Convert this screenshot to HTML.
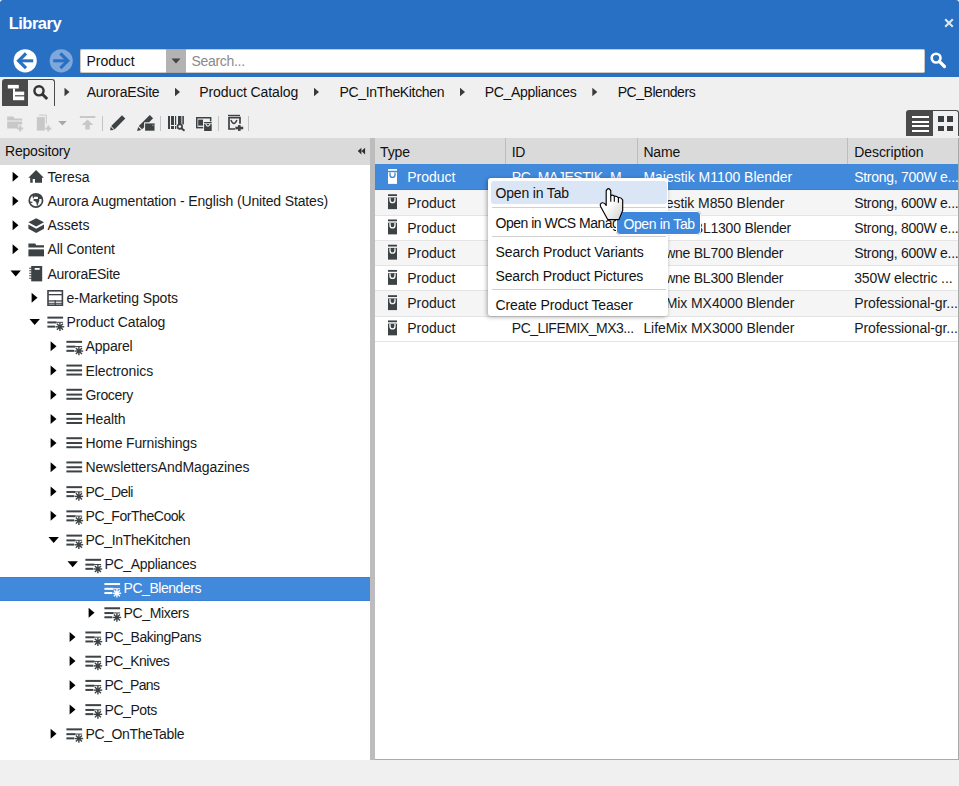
<!DOCTYPE html>
<html><head><meta charset="utf-8"><style>
html,body{margin:0;padding:0;width:959px;height:786px;overflow:hidden;background:#ffffff;}
body{position:relative;font-family:"Liberation Sans",sans-serif;}
.b{position:absolute;display:block;}
.t{position:absolute;white-space:nowrap;}
.t,.b{}
</style></head><body>
<div class="b" style="left:0px;top:0px;width:959px;height:77px;background:#2770c4;border-radius:3px 3px 0 0;"></div>
<div class="t" style="left:8.7px;top:14.38px;font-size:16.5px;line-height:19.8px;color:#ffffff;font-weight:bold;letter-spacing:-0.5px;">Library</div>
<svg class="b" style="left:944px;top:18px;overflow:visible" width="11" height="11"><g transform="translate(0.000 0.000)"><path d="M1.2 1.2 L8.8 8.8 M8.8 1.2 L1.2 8.8" stroke="#dfe7f2" stroke-width="2.1" stroke-linecap="butt"/></g></svg>
<svg class="b" style="left:13px;top:48px;overflow:visible" width="25" height="25"><g transform="translate(0.200 0.800)"><circle cx="12" cy="12" r="11.6" fill="#ffffff"/><path d="M12.8 4.6 L5.4 12 L12.8 19.4" fill="none" stroke="#2770c4" stroke-width="3.2"/><path d="M6.5 12 H20" stroke="#2770c4" stroke-width="3"/></g></svg>
<svg class="b" style="left:49px;top:48px;overflow:visible" width="25" height="25"><g transform="translate(0.200 0.800)"><circle cx="12" cy="12" r="11.6" fill="#7ea8dc"/><path d="M11.2 4.6 L18.6 12 L11.2 19.4" fill="none" stroke="#2770c4" stroke-width="3.2"/><path d="M4 12 H17.5" stroke="#2770c4" stroke-width="3"/></g></svg>
<div class="b" style="left:80px;top:49px;width:86px;height:24px;background:#ffffff;border-radius:2px 0 0 2px;border:1px solid #cfc9c3;border-right:0;box-sizing:border-box;"></div>
<div class="t" style="left:86.5px;top:53.25px;font-size:14px;line-height:16.8px;color:#111;font-weight:normal;letter-spacing:-0.021px;">Product</div>
<div class="b" style="left:166px;top:49px;width:20px;height:24px;background:#b3b3b3;border-top:1px solid #a9a6a3;border-bottom:1px solid #a9a6a3;box-sizing:border-box;"></div>
<svg class="b" style="left:171px;top:58px;overflow:visible" width="11" height="7"><g transform="translate(0.000 0.000)"><path d="M0.5 0.5 H9.5 L5 5.5 Z" fill="#444"/></g></svg>
<div class="b" style="left:186px;top:49px;width:739px;height:24px;background:#ffffff;border-radius:0 2px 2px 0;border:1px solid #cfc9c3;border-left:0;box-sizing:border-box;"></div>
<div class="t" style="left:191.5px;top:53.25px;font-size:14px;line-height:16.8px;color:#8a8a8a;font-weight:normal;letter-spacing:-0.313px;">Search...</div>
<svg class="b" style="left:929px;top:51px;overflow:visible" width="19" height="19"><g transform="translate(0.500 0.500)"><circle cx="6.6" cy="6.6" r="4.4" fill="none" stroke="#ffffff" stroke-width="2.6"/><path d="M9.8 9.8 L15 15" stroke="#ffffff" stroke-width="3.2" stroke-linecap="round"/></g></svg>
<div class="b" style="left:0px;top:77px;width:959px;height:709px;background:#f0f0f0;"></div>
<div class="b" style="left:2px;top:79px;width:26px;height:27px;background:#4a4a4a;border-radius:3px 0 0 0;"></div>
<div class="b" style="left:28px;top:79px;width:27px;height:27px;background:#f0f0f0;border-top:1px solid #4a4a4a;border-right:1px solid #4a4a4a;border-radius:0 3px 0 0;box-sizing:border-box;"></div>
<svg class="b" style="left:7px;top:84px;overflow:visible" width="19" height="18"><g transform="translate(0.000 0.000)"><rect x="0.8" y="0.9" width="11" height="3.6" fill="#fff"/><rect x="6" y="4.5" width="2" height="11.7" fill="#fff"/><rect x="8" y="7.6" width="9.2" height="3.6" fill="#fff"/><rect x="8" y="12.4" width="9.2" height="3.8" fill="#fff"/></g></svg>
<svg class="b" style="left:32px;top:84px;overflow:visible" width="19" height="19"><g transform="translate(0.000 0.000)"><circle cx="7" cy="6.8" r="4.6" fill="none" stroke="#333" stroke-width="2.4"/><path d="M10.2 10 L15.2 15" stroke="#333" stroke-width="3"/></g></svg>
<svg class="b" style="left:64px;top:87px;overflow:visible" width="7" height="10"><g transform="translate(0.500 0.800)"><path d="M0 0 L5 4.2 L0 8.4 Z" fill="#3a3a3a"/></g></svg>
<div class="t" style="left:86.75px;top:83.85px;font-size:14px;line-height:16.8px;color:#111;font-weight:normal;letter-spacing:-0.264px;">AuroraESite</div>
<svg class="b" style="left:175px;top:87px;overflow:visible" width="7" height="10"><g transform="translate(0.000 0.800)"><path d="M0 0 L5 4.2 L0 8.4 Z" fill="#3a3a3a"/></g></svg>
<div class="t" style="left:199.3px;top:83.85px;font-size:14px;line-height:16.8px;color:#111;font-weight:normal;letter-spacing:-0.106px;">Product Catalog</div>
<svg class="b" style="left:314px;top:87px;overflow:visible" width="7" height="10"><g transform="translate(0.000 0.800)"><path d="M0 0 L5 4.2 L0 8.4 Z" fill="#3a3a3a"/></g></svg>
<div class="t" style="left:339.5px;top:83.85px;font-size:14px;line-height:16.8px;color:#111;font-weight:normal;letter-spacing:-0.338px;">PC_InTheKitchen</div>
<svg class="b" style="left:460px;top:87px;overflow:visible" width="7" height="10"><g transform="translate(0.000 0.800)"><path d="M0 0 L5 4.2 L0 8.4 Z" fill="#3a3a3a"/></g></svg>
<div class="t" style="left:484.8px;top:83.85px;font-size:14px;line-height:16.8px;color:#111;font-weight:normal;letter-spacing:-0.317px;">PC_Appliances</div>
<svg class="b" style="left:592px;top:87px;overflow:visible" width="7" height="10"><g transform="translate(0.300 0.800)"><path d="M0 0 L5 4.2 L0 8.4 Z" fill="#3a3a3a"/></g></svg>
<div class="t" style="left:617.7px;top:83.85px;font-size:14px;line-height:16.8px;color:#111;font-weight:normal;letter-spacing:-0.452px;">PC_Blenders</div>
<svg class="b" style="left:7px;top:115px;overflow:visible" width="19" height="18"><g transform="translate(0.200 0.500)"><path d="M0 1 H6 L7.5 3 H15 V5 H0 Z" fill="#c8c8c8"/><path d="M0 6 H15 V9 H11 V13 H0 Z" fill="#c8c8c8"/><path d="M12 10 H14 V12 H16 V14 H14 V16 H12 V14 H10 V12 H12 Z" fill="#c8c8c8"/></g></svg>
<svg class="b" style="left:36px;top:114px;overflow:visible" width="18" height="19"><g transform="translate(0.300 0.600)"><path d="M0.5 2.5 H8.5 V16 H0.5 Z" fill="#c8c8c8"/><path d="M2.5 0.5 H10 V9" fill="none" stroke="#c8c8c8" stroke-width="1"/><path d="M11 11 H13 V13 H15 V15 H13 V17 H11 V15 H9 V13 H11 Z" fill="#c8c8c8"/></g></svg>
<svg class="b" style="left:58px;top:121px;overflow:visible" width="10" height="6"><g transform="translate(0.200 0.000)"><path d="M0 0 H8.5 L4.25 4.5 Z" fill="#a8a8a8"/></g></svg>
<svg class="b" style="left:79px;top:116px;overflow:visible" width="17" height="15"><g transform="translate(0.800 0.000)"><rect x="0" y="0" width="15.5" height="2" fill="#c8c8c8"/><path d="M7.75 3.5 L13.5 9 H10 V13.5 H5.5 V9 H2 Z" fill="#c8c8c8"/></g></svg>
<div class="b" style="left:102px;top:116px;width:1px;height:14.5px;background:#c4c4c4;"></div>
<div class="b" style="left:160px;top:116px;width:1px;height:14.5px;background:#c4c4c4;"></div>
<div class="b" style="left:218px;top:116px;width:1px;height:14.5px;background:#c4c4c4;"></div>
<div class="b" style="left:248px;top:116px;width:1px;height:14.5px;background:#c4c4c4;"></div>
<svg class="b" style="left:109px;top:114px;overflow:visible" width="18" height="17"><g transform="translate(0.500 0.500)"><path d="M12.5 0.8 L15.8 4.1 L5 14.9 L1.7 11.6 Z" fill="#3d4245"/><path d="M1.2 12.2 L4.4 15.4 L0.6 15.8 Z" fill="#3d4245"/></g></svg>
<svg class="b" style="left:136px;top:114px;overflow:visible" width="20" height="18"><g transform="translate(0.500 0.500)"><path d="M13.3 0.5 L16.6 3.8 L5.6 14.8 L2.3 11.5 Z" fill="#3d4245"/><path d="M1.6 12.4 L4.8 15.6 L0.6 16.6 Z" fill="#3d4245"/><rect x="7.6" y="7.8" width="11.4" height="9.2" fill="#f0f0f0"/><rect x="8.6" y="8.7" width="9.4" height="7.5" fill="#3d4245"/><rect x="8.6" y="8.7" width="9.4" height="0.8" fill="#9a9a9a"/><circle cx="16.4" cy="10.8" r="0.6" fill="#b9c9b9"/></g></svg>
<svg class="b" style="left:168px;top:116px;overflow:visible" width="19" height="17"><g transform="translate(0.000 0.000)"><rect x="0" y="0" width="2" height="13" fill="#3d4245"/><rect x="3" y="0" width="3" height="13" fill="#3d4245"/><rect x="7" y="0" width="1.2" height="13" fill="#3d4245"/><rect x="10" y="0" width="3.4" height="8.4" fill="#3d4245"/><rect x="14.3" y="0" width="1.6" height="8.4" fill="#3d4245"/><rect x="2" y="9" width="7.5" height="1" fill="#f0f0f0"/><circle cx="11.8" cy="10.6" r="2.3" fill="none" stroke="#3d4245" stroke-width="1.7"/><path d="M13.4 12.3 L16.5 14.8" stroke="#3d4245" stroke-width="2"/></g></svg>
<svg class="b" style="left:196px;top:117px;overflow:visible" width="19" height="16"><g transform="translate(0.000 0.000)"><rect x="0.75" y="0.75" width="13.9" height="9.9" fill="none" stroke="#3d4245" stroke-width="1.5"/><rect x="2.2" y="2.6" width="4.8" height="6" fill="#3d4245"/><rect x="7.2" y="4.4" width="10" height="10.6" fill="#f0f0f0"/><rect x="8.1" y="5" width="7.6" height="1.2" fill="#3d4245"/><rect x="8.1" y="6.9" width="7.6" height="7.1" fill="#3d4245"/><path d="M10 6.9 V7.6 Q11.9 10.6 13.8 7.6 V6.9" fill="none" stroke="#f0f0f0" stroke-width="1.1"/></g></svg>
<svg class="b" style="left:228px;top:114px;overflow:visible" width="17" height="18"><g transform="translate(0.000 0.500)"><rect x="0" y="0.3" width="12" height="1.3" fill="#3d4245"/><path d="M12 9.2 V3.2 H1 V14.5 H7.5" fill="none" stroke="#3d4245" stroke-width="1.7"/><path d="M2.9 5.5 Q5.9 12.5 8.9 5.5" fill="none" stroke="#3d4245" stroke-width="1.5"/><rect x="7.3" y="10.5" width="8.7" height="6.5" fill="#f0f0f0"/><rect x="7.4" y="12.2" width="7.8" height="2.6" fill="#3d4245"/><rect x="10" y="10.6" width="2.6" height="5.8" fill="#3d4245"/></g></svg>
<div class="b" style="left:906px;top:110px;width:27px;height:26px;background:#4a4a4a;border-radius:3px 0 0 0;"></div>
<div class="b" style="left:933px;top:110px;width:26px;height:26px;background:#f0f0f0;border-top:1px solid #4a4a4a;border-right:1px solid #4a4a4a;border-radius:0 3px 0 0;box-sizing:border-box;"></div>
<div class="b" style="left:912px;top:116px;width:16.5px;height:2.2px;background:#fff;"></div>
<div class="b" style="left:912px;top:120.5px;width:16.5px;height:2.2px;background:#fff;"></div>
<div class="b" style="left:912px;top:125px;width:16.5px;height:2.2px;background:#fff;"></div>
<div class="b" style="left:912px;top:129.5px;width:16.5px;height:2.2px;background:#fff;"></div>
<div class="b" style="left:937.6px;top:116px;width:6px;height:5.5px;background:#3a3e41;"></div>
<div class="b" style="left:937.6px;top:125.6px;width:6px;height:5.5px;background:#3a3e41;"></div>
<div class="b" style="left:947px;top:116px;width:6px;height:5.5px;background:#3a3e41;"></div>
<div class="b" style="left:947px;top:125.6px;width:6px;height:5.5px;background:#3a3e41;"></div>
<div class="b" style="left:0px;top:138px;width:370px;height:26.5px;background:#dadada;"></div>
<div class="t" style="left:5px;top:142.75px;font-size:14px;line-height:16.8px;color:#111;font-weight:normal;letter-spacing:-0.188px;">Repository</div>
<svg class="b" style="left:357px;top:147px;overflow:visible" width="9" height="8"><g transform="translate(0.800 0.700)"><path d="M3.6 0 L0 3.35 L3.6 6.7 Z M7.3 0 L3.7 3.35 L7.3 6.7 Z" fill="#2e2e2e"/></g></svg>
<div class="b" style="left:0px;top:164.5px;width:370px;height:595.5px;background:#ffffff;"></div>
<div class="b" style="left:370px;top:138px;width:5px;height:622px;background:#bdbdbd;"></div>
<svg class="b" style="left:12px;top:171px;overflow:visible" width="8" height="11"><g transform="translate(0.600 0.700)"><path d="M0 0 L5.9 5 L0 10 Z" fill="#000"/></g></svg>
<svg class="b" style="left:28px;top:168px;overflow:visible" width="17" height="17"><g transform="translate(0.200 0.900)"><path d="M7.9 1 L15.6 8.9 H13.8 V13.9 H6.8 V10 H4.5 V13.9 H2 V8.9 H0.1 Z" fill="#3d4245"/></g></svg>
<div class="t" style="left:47.5px;top:168.75px;font-size:14px;line-height:16.8px;color:#1a1a1a;font-weight:normal;letter-spacing:-0.001px;">Teresa</div>
<svg class="b" style="left:12px;top:195px;overflow:visible" width="8" height="11"><g transform="translate(0.600 0.920)"><path d="M0 0 L5.9 5 L0 10 Z" fill="#000"/></g></svg>
<svg class="b" style="left:28px;top:193px;overflow:visible" width="17" height="17"><g transform="translate(0.200 0.120)"><circle cx="7.7" cy="7.3" r="6.65" fill="none" stroke="#3d4245" stroke-width="1.7"/><path d="M4.2 1.8 Q7.7 0.3 12 1.6 L14 3.8 L14.2 5.6 L12.4 6 L10.9 6 L11.2 7.5 L10.2 10 L9.2 12.8 L8.7 12.6 L8.2 9.6 L7 8.2 L5.3 7.6 L5.2 6.4 L5.8 5.9 L9.6 5.9 L9.8 4.6 L9.4 3.7 L5.9 3.7 L5.6 5.4 L4.6 5.0 Z" fill="#3d4245"/><path d="M1.4 8.6 H4.2 V9.8 H1.4 Z" fill="#3d4245"/></g></svg>
<div class="t" style="left:47.5px;top:192.97px;font-size:14px;line-height:16.8px;color:#1a1a1a;font-weight:normal;letter-spacing:-0.146px;">Aurora Augmentation - English (United States)</div>
<svg class="b" style="left:12px;top:220px;overflow:visible" width="8" height="11"><g transform="translate(0.600 0.140)"><path d="M0 0 L5.9 5 L0 10 Z" fill="#000"/></g></svg>
<svg class="b" style="left:28px;top:217px;overflow:visible" width="17" height="17"><g transform="translate(0.200 0.340)"><path d="M8 1 L15.8 5 L8 9.2 L0.2 5 Z" fill="#3d4245"/><path d="M0.2 7.2 L8 11.4 L15.8 7.2 V11.4 L8 15.6 L0.2 11.4 Z" fill="#3d4245"/></g></svg>
<div class="t" style="left:47.5px;top:217.19px;font-size:14px;line-height:16.8px;color:#1a1a1a;font-weight:normal;letter-spacing:-0.011px;">Assets</div>
<svg class="b" style="left:12px;top:244px;overflow:visible" width="8" height="11"><g transform="translate(0.600 0.360)"><path d="M0 0 L5.9 5 L0 10 Z" fill="#000"/></g></svg>
<svg class="b" style="left:28px;top:241px;overflow:visible" width="17" height="17"><g transform="translate(0.200 0.560)"><path d="M0.2 2 H7 L8 3.8 H15.8 V6 H0.2 Z" fill="#3d4245"/><path d="M0.2 7.8 H15.8 V14.8 H0.2 Z" fill="#3d4245"/></g></svg>
<div class="t" style="left:47.5px;top:241.41px;font-size:14px;line-height:16.8px;color:#1a1a1a;font-weight:normal;letter-spacing:-0.099px;">All Content</div>
<svg class="b" style="left:10px;top:270px;overflow:visible" width="12" height="8"><g transform="translate(0.500 0.580)"><path d="M0 0 H10.4 L5.2 6 Z" fill="#000"/></g></svg>
<svg class="b" style="left:28px;top:265px;overflow:visible" width="17" height="17"><g transform="translate(0.200 0.780)"><rect x="3" y="0.2" width="11" height="15.4" fill="#3d4245"/><rect x="6.5" y="2.2" width="5" height="1.8" fill="#fff"/><path d="M1 2.5 H3.5 M1 5 H3.5 M1 7.5 H3.5 M1 10 H3.5 M1 12.5 H3.5" stroke="#3d4245" stroke-width="1"/></g></svg>
<div class="t" style="left:47.5px;top:265.63px;font-size:14px;line-height:16.8px;color:#1a1a1a;font-weight:normal;letter-spacing:-0.264px;">AuroraESite</div>
<svg class="b" style="left:31px;top:292px;overflow:visible" width="8" height="11"><g transform="translate(0.600 0.800)"><path d="M0 0 L5.9 5 L0 10 Z" fill="#000"/></g></svg>
<svg class="b" style="left:47px;top:290px;overflow:visible" width="17" height="17"><g transform="translate(0.200 0.000)"><rect x="0.8" y="0.8" width="14.4" height="14.4" fill="none" stroke="#3d4245" stroke-width="1.6"/><rect x="1" y="4" width="14" height="1.3" fill="#3d4245"/><rect x="1" y="10.3" width="14" height="1.3" fill="#3d4245"/><rect x="1" y="12.8" width="14" height="1" fill="#3d4245"/><rect x="7.4" y="10.3" width="1.2" height="5" fill="#3d4245"/></g></svg>
<div class="t" style="left:66.5px;top:289.85px;font-size:14px;line-height:16.8px;color:#1a1a1a;font-weight:normal;letter-spacing:-0.136px;">e-Marketing Spots</div>
<svg class="b" style="left:29px;top:319px;overflow:visible" width="12" height="8"><g transform="translate(0.500 0.020)"><path d="M0 0 H10.4 L5.2 6 Z" fill="#000"/></g></svg>
<svg class="b" style="left:47px;top:314px;overflow:visible" width="18" height="18"><g transform="translate(0.200 0.220)"><rect x="0.2" y="2.4" width="15.7" height="2" fill="#3d4245"/><rect x="0.2" y="7.2" width="9" height="2" fill="#3d4245"/><rect x="9" y="7.6" width="6.9" height="1" fill="#3d4245"/><rect x="0.2" y="11.4" width="7.8" height="2" fill="#3d4245"/><circle cx="12.7" cy="12.6" r="1.9" fill="#3d4245"/><path d="M12.7 12.6 L17.00 12.60" stroke="#3d4245" stroke-width="1.4"/><path d="M12.7 12.6 L15.74 15.64" stroke="#3d4245" stroke-width="1.4"/><path d="M12.7 12.6 L12.70 16.90" stroke="#3d4245" stroke-width="1.4"/><path d="M12.7 12.6 L9.66 15.64" stroke="#3d4245" stroke-width="1.4"/><path d="M12.7 12.6 L8.40 12.60" stroke="#3d4245" stroke-width="1.4"/><path d="M12.7 12.6 L9.66 9.56" stroke="#3d4245" stroke-width="1.4"/><path d="M12.7 12.6 L12.70 8.30" stroke="#3d4245" stroke-width="1.4"/><path d="M12.7 12.6 L15.74 9.56" stroke="#3d4245" stroke-width="1.4"/></g></svg>
<div class="t" style="left:66.5px;top:314.07px;font-size:14px;line-height:16.8px;color:#1a1a1a;font-weight:normal;letter-spacing:-0.106px;">Product Catalog</div>
<svg class="b" style="left:50px;top:341px;overflow:visible" width="8" height="11"><g transform="translate(0.600 0.240)"><path d="M0 0 L5.9 5 L0 10 Z" fill="#000"/></g></svg>
<svg class="b" style="left:66px;top:338px;overflow:visible" width="18" height="18"><g transform="translate(0.200 0.440)"><rect x="0.2" y="2.4" width="15.7" height="2" fill="#3d4245"/><rect x="0.2" y="7.2" width="9" height="2" fill="#3d4245"/><rect x="9" y="7.6" width="6.9" height="1" fill="#3d4245"/><rect x="0.2" y="11.4" width="7.8" height="2" fill="#3d4245"/><circle cx="12.7" cy="12.6" r="1.9" fill="#3d4245"/><path d="M12.7 12.6 L17.00 12.60" stroke="#3d4245" stroke-width="1.4"/><path d="M12.7 12.6 L15.74 15.64" stroke="#3d4245" stroke-width="1.4"/><path d="M12.7 12.6 L12.70 16.90" stroke="#3d4245" stroke-width="1.4"/><path d="M12.7 12.6 L9.66 15.64" stroke="#3d4245" stroke-width="1.4"/><path d="M12.7 12.6 L8.40 12.60" stroke="#3d4245" stroke-width="1.4"/><path d="M12.7 12.6 L9.66 9.56" stroke="#3d4245" stroke-width="1.4"/><path d="M12.7 12.6 L12.70 8.30" stroke="#3d4245" stroke-width="1.4"/><path d="M12.7 12.6 L15.74 9.56" stroke="#3d4245" stroke-width="1.4"/></g></svg>
<div class="t" style="left:85.5px;top:338.29px;font-size:14px;line-height:16.8px;color:#1a1a1a;font-weight:normal;letter-spacing:-0.170px;">Apparel</div>
<svg class="b" style="left:50px;top:365px;overflow:visible" width="8" height="11"><g transform="translate(0.600 0.460)"><path d="M0 0 L5.9 5 L0 10 Z" fill="#000"/></g></svg>
<svg class="b" style="left:66px;top:362px;overflow:visible" width="17" height="17"><g transform="translate(0.200 0.660)"><rect x="0.2" y="1.9" width="15.7" height="2" fill="#3d4245"/><rect x="0.2" y="6.7" width="15.7" height="2" fill="#3d4245"/><rect x="0.2" y="10.9" width="15.7" height="2" fill="#3d4245"/></g></svg>
<div class="t" style="left:85.5px;top:362.51px;font-size:14px;line-height:16.8px;color:#1a1a1a;font-weight:normal;letter-spacing:-0.079px;">Electronics</div>
<svg class="b" style="left:50px;top:389px;overflow:visible" width="8" height="11"><g transform="translate(0.600 0.680)"><path d="M0 0 L5.9 5 L0 10 Z" fill="#000"/></g></svg>
<svg class="b" style="left:66px;top:386px;overflow:visible" width="17" height="17"><g transform="translate(0.200 0.880)"><rect x="0.2" y="1.9" width="15.7" height="2" fill="#3d4245"/><rect x="0.2" y="6.7" width="15.7" height="2" fill="#3d4245"/><rect x="0.2" y="10.9" width="15.7" height="2" fill="#3d4245"/></g></svg>
<div class="t" style="left:85.5px;top:386.73px;font-size:14px;line-height:16.8px;color:#1a1a1a;font-weight:normal;letter-spacing:-0.336px;">Grocery</div>
<svg class="b" style="left:50px;top:413px;overflow:visible" width="8" height="11"><g transform="translate(0.600 0.900)"><path d="M0 0 L5.9 5 L0 10 Z" fill="#000"/></g></svg>
<svg class="b" style="left:66px;top:411px;overflow:visible" width="17" height="17"><g transform="translate(0.200 0.100)"><rect x="0.2" y="1.9" width="15.7" height="2" fill="#3d4245"/><rect x="0.2" y="6.7" width="15.7" height="2" fill="#3d4245"/><rect x="0.2" y="10.9" width="15.7" height="2" fill="#3d4245"/></g></svg>
<div class="t" style="left:85.5px;top:410.95px;font-size:14px;line-height:16.8px;color:#1a1a1a;font-weight:normal;letter-spacing:-0.083px;">Health</div>
<svg class="b" style="left:50px;top:438px;overflow:visible" width="8" height="11"><g transform="translate(0.600 0.120)"><path d="M0 0 L5.9 5 L0 10 Z" fill="#000"/></g></svg>
<svg class="b" style="left:66px;top:435px;overflow:visible" width="17" height="17"><g transform="translate(0.200 0.320)"><rect x="0.2" y="1.9" width="15.7" height="2" fill="#3d4245"/><rect x="0.2" y="6.7" width="15.7" height="2" fill="#3d4245"/><rect x="0.2" y="10.9" width="15.7" height="2" fill="#3d4245"/></g></svg>
<div class="t" style="left:85.5px;top:435.17px;font-size:14px;line-height:16.8px;color:#1a1a1a;font-weight:normal;letter-spacing:-0.142px;">Home Furnishings</div>
<svg class="b" style="left:50px;top:462px;overflow:visible" width="8" height="11"><g transform="translate(0.600 0.340)"><path d="M0 0 L5.9 5 L0 10 Z" fill="#000"/></g></svg>
<svg class="b" style="left:66px;top:459px;overflow:visible" width="17" height="17"><g transform="translate(0.200 0.540)"><rect x="0.2" y="1.9" width="15.7" height="2" fill="#3d4245"/><rect x="0.2" y="6.7" width="15.7" height="2" fill="#3d4245"/><rect x="0.2" y="10.9" width="15.7" height="2" fill="#3d4245"/></g></svg>
<div class="t" style="left:85.5px;top:459.39px;font-size:14px;line-height:16.8px;color:#1a1a1a;font-weight:normal;letter-spacing:-0.078px;">NewslettersAndMagazines</div>
<svg class="b" style="left:50px;top:486px;overflow:visible" width="8" height="11"><g transform="translate(0.600 0.560)"><path d="M0 0 L5.9 5 L0 10 Z" fill="#000"/></g></svg>
<svg class="b" style="left:66px;top:483px;overflow:visible" width="18" height="18"><g transform="translate(0.200 0.760)"><rect x="0.2" y="2.4" width="15.7" height="2" fill="#3d4245"/><rect x="0.2" y="7.2" width="9" height="2" fill="#3d4245"/><rect x="9" y="7.6" width="6.9" height="1" fill="#3d4245"/><rect x="0.2" y="11.4" width="7.8" height="2" fill="#3d4245"/><circle cx="12.7" cy="12.6" r="1.9" fill="#3d4245"/><path d="M12.7 12.6 L17.00 12.60" stroke="#3d4245" stroke-width="1.4"/><path d="M12.7 12.6 L15.74 15.64" stroke="#3d4245" stroke-width="1.4"/><path d="M12.7 12.6 L12.70 16.90" stroke="#3d4245" stroke-width="1.4"/><path d="M12.7 12.6 L9.66 15.64" stroke="#3d4245" stroke-width="1.4"/><path d="M12.7 12.6 L8.40 12.60" stroke="#3d4245" stroke-width="1.4"/><path d="M12.7 12.6 L9.66 9.56" stroke="#3d4245" stroke-width="1.4"/><path d="M12.7 12.6 L12.70 8.30" stroke="#3d4245" stroke-width="1.4"/><path d="M12.7 12.6 L15.74 9.56" stroke="#3d4245" stroke-width="1.4"/></g></svg>
<div class="t" style="left:85.5px;top:483.61px;font-size:14px;line-height:16.8px;color:#1a1a1a;font-weight:normal;letter-spacing:-0.598px;">PC_Deli</div>
<svg class="b" style="left:50px;top:510px;overflow:visible" width="8" height="11"><g transform="translate(0.600 0.780)"><path d="M0 0 L5.9 5 L0 10 Z" fill="#000"/></g></svg>
<svg class="b" style="left:66px;top:507px;overflow:visible" width="18" height="18"><g transform="translate(0.200 0.980)"><rect x="0.2" y="2.4" width="15.7" height="2" fill="#3d4245"/><rect x="0.2" y="7.2" width="9" height="2" fill="#3d4245"/><rect x="9" y="7.6" width="6.9" height="1" fill="#3d4245"/><rect x="0.2" y="11.4" width="7.8" height="2" fill="#3d4245"/><circle cx="12.7" cy="12.6" r="1.9" fill="#3d4245"/><path d="M12.7 12.6 L17.00 12.60" stroke="#3d4245" stroke-width="1.4"/><path d="M12.7 12.6 L15.74 15.64" stroke="#3d4245" stroke-width="1.4"/><path d="M12.7 12.6 L12.70 16.90" stroke="#3d4245" stroke-width="1.4"/><path d="M12.7 12.6 L9.66 15.64" stroke="#3d4245" stroke-width="1.4"/><path d="M12.7 12.6 L8.40 12.60" stroke="#3d4245" stroke-width="1.4"/><path d="M12.7 12.6 L9.66 9.56" stroke="#3d4245" stroke-width="1.4"/><path d="M12.7 12.6 L12.70 8.30" stroke="#3d4245" stroke-width="1.4"/><path d="M12.7 12.6 L15.74 9.56" stroke="#3d4245" stroke-width="1.4"/></g></svg>
<div class="t" style="left:85.5px;top:507.83px;font-size:14px;line-height:16.8px;color:#1a1a1a;font-weight:normal;letter-spacing:-0.456px;">PC_ForTheCook</div>
<svg class="b" style="left:48px;top:536px;overflow:visible" width="12" height="8"><g transform="translate(0.500 1.000)"><path d="M0 0 H10.4 L5.2 6 Z" fill="#000"/></g></svg>
<svg class="b" style="left:66px;top:532px;overflow:visible" width="18" height="18"><g transform="translate(0.200 0.200)"><rect x="0.2" y="2.4" width="15.7" height="2" fill="#3d4245"/><rect x="0.2" y="7.2" width="9" height="2" fill="#3d4245"/><rect x="9" y="7.6" width="6.9" height="1" fill="#3d4245"/><rect x="0.2" y="11.4" width="7.8" height="2" fill="#3d4245"/><circle cx="12.7" cy="12.6" r="1.9" fill="#3d4245"/><path d="M12.7 12.6 L17.00 12.60" stroke="#3d4245" stroke-width="1.4"/><path d="M12.7 12.6 L15.74 15.64" stroke="#3d4245" stroke-width="1.4"/><path d="M12.7 12.6 L12.70 16.90" stroke="#3d4245" stroke-width="1.4"/><path d="M12.7 12.6 L9.66 15.64" stroke="#3d4245" stroke-width="1.4"/><path d="M12.7 12.6 L8.40 12.60" stroke="#3d4245" stroke-width="1.4"/><path d="M12.7 12.6 L9.66 9.56" stroke="#3d4245" stroke-width="1.4"/><path d="M12.7 12.6 L12.70 8.30" stroke="#3d4245" stroke-width="1.4"/><path d="M12.7 12.6 L15.74 9.56" stroke="#3d4245" stroke-width="1.4"/></g></svg>
<div class="t" style="left:85.5px;top:532.05px;font-size:14px;line-height:16.8px;color:#1a1a1a;font-weight:normal;letter-spacing:-0.338px;">PC_InTheKitchen</div>
<svg class="b" style="left:67px;top:561px;overflow:visible" width="12" height="8"><g transform="translate(0.500 0.220)"><path d="M0 0 H10.4 L5.2 6 Z" fill="#000"/></g></svg>
<svg class="b" style="left:85px;top:556px;overflow:visible" width="18" height="18"><g transform="translate(0.200 0.420)"><rect x="0.2" y="2.4" width="15.7" height="2" fill="#3d4245"/><rect x="0.2" y="7.2" width="9" height="2" fill="#3d4245"/><rect x="9" y="7.6" width="6.9" height="1" fill="#3d4245"/><rect x="0.2" y="11.4" width="7.8" height="2" fill="#3d4245"/><circle cx="12.7" cy="12.6" r="1.9" fill="#3d4245"/><path d="M12.7 12.6 L17.00 12.60" stroke="#3d4245" stroke-width="1.4"/><path d="M12.7 12.6 L15.74 15.64" stroke="#3d4245" stroke-width="1.4"/><path d="M12.7 12.6 L12.70 16.90" stroke="#3d4245" stroke-width="1.4"/><path d="M12.7 12.6 L9.66 15.64" stroke="#3d4245" stroke-width="1.4"/><path d="M12.7 12.6 L8.40 12.60" stroke="#3d4245" stroke-width="1.4"/><path d="M12.7 12.6 L9.66 9.56" stroke="#3d4245" stroke-width="1.4"/><path d="M12.7 12.6 L12.70 8.30" stroke="#3d4245" stroke-width="1.4"/><path d="M12.7 12.6 L15.74 9.56" stroke="#3d4245" stroke-width="1.4"/></g></svg>
<div class="t" style="left:104.5px;top:556.27px;font-size:14px;line-height:16.8px;color:#1a1a1a;font-weight:normal;letter-spacing:-0.317px;">PC_Appliances</div>
<div class="b" style="left:0px;top:576.64px;width:370px;height:24.22px;background:#4189db;border-top:1px solid #3a80d6;border-bottom:1px solid #3a80d6;box-sizing:border-box;"></div>
<svg class="b" style="left:104px;top:580px;overflow:visible" width="18" height="18"><g transform="translate(0.200 0.640)"><rect x="0.2" y="2.4" width="15.7" height="2" fill="#ffffff"/><rect x="0.2" y="7.2" width="9" height="2" fill="#ffffff"/><rect x="9" y="7.6" width="6.9" height="1" fill="#ffffff"/><rect x="0.2" y="11.4" width="7.8" height="2" fill="#ffffff"/><circle cx="12.7" cy="12.6" r="1.9" fill="#ffffff"/><path d="M12.7 12.6 L17.00 12.60" stroke="#ffffff" stroke-width="1.4"/><path d="M12.7 12.6 L15.74 15.64" stroke="#ffffff" stroke-width="1.4"/><path d="M12.7 12.6 L12.70 16.90" stroke="#ffffff" stroke-width="1.4"/><path d="M12.7 12.6 L9.66 15.64" stroke="#ffffff" stroke-width="1.4"/><path d="M12.7 12.6 L8.40 12.60" stroke="#ffffff" stroke-width="1.4"/><path d="M12.7 12.6 L9.66 9.56" stroke="#ffffff" stroke-width="1.4"/><path d="M12.7 12.6 L12.70 8.30" stroke="#ffffff" stroke-width="1.4"/><path d="M12.7 12.6 L15.74 9.56" stroke="#ffffff" stroke-width="1.4"/></g></svg>
<div class="t" style="left:123.5px;top:580.49px;font-size:14px;line-height:16.8px;color:#ffffff;font-weight:normal;letter-spacing:-0.452px;">PC_Blenders</div>
<svg class="b" style="left:88px;top:607px;overflow:visible" width="8" height="11"><g transform="translate(0.600 0.660)"><path d="M0 0 L5.9 5 L0 10 Z" fill="#000"/></g></svg>
<svg class="b" style="left:104px;top:604px;overflow:visible" width="18" height="18"><g transform="translate(0.200 0.860)"><rect x="0.2" y="2.4" width="15.7" height="2" fill="#3d4245"/><rect x="0.2" y="7.2" width="9" height="2" fill="#3d4245"/><rect x="9" y="7.6" width="6.9" height="1" fill="#3d4245"/><rect x="0.2" y="11.4" width="7.8" height="2" fill="#3d4245"/><circle cx="12.7" cy="12.6" r="1.9" fill="#3d4245"/><path d="M12.7 12.6 L17.00 12.60" stroke="#3d4245" stroke-width="1.4"/><path d="M12.7 12.6 L15.74 15.64" stroke="#3d4245" stroke-width="1.4"/><path d="M12.7 12.6 L12.70 16.90" stroke="#3d4245" stroke-width="1.4"/><path d="M12.7 12.6 L9.66 15.64" stroke="#3d4245" stroke-width="1.4"/><path d="M12.7 12.6 L8.40 12.60" stroke="#3d4245" stroke-width="1.4"/><path d="M12.7 12.6 L9.66 9.56" stroke="#3d4245" stroke-width="1.4"/><path d="M12.7 12.6 L12.70 8.30" stroke="#3d4245" stroke-width="1.4"/><path d="M12.7 12.6 L15.74 9.56" stroke="#3d4245" stroke-width="1.4"/></g></svg>
<div class="t" style="left:123.5px;top:604.71px;font-size:14px;line-height:16.8px;color:#1a1a1a;font-weight:normal;letter-spacing:-0.346px;">PC_Mixers</div>
<svg class="b" style="left:69px;top:631px;overflow:visible" width="8" height="11"><g transform="translate(0.600 0.880)"><path d="M0 0 L5.9 5 L0 10 Z" fill="#000"/></g></svg>
<svg class="b" style="left:85px;top:629px;overflow:visible" width="18" height="18"><g transform="translate(0.200 0.080)"><rect x="0.2" y="2.4" width="15.7" height="2" fill="#3d4245"/><rect x="0.2" y="7.2" width="9" height="2" fill="#3d4245"/><rect x="9" y="7.6" width="6.9" height="1" fill="#3d4245"/><rect x="0.2" y="11.4" width="7.8" height="2" fill="#3d4245"/><circle cx="12.7" cy="12.6" r="1.9" fill="#3d4245"/><path d="M12.7 12.6 L17.00 12.60" stroke="#3d4245" stroke-width="1.4"/><path d="M12.7 12.6 L15.74 15.64" stroke="#3d4245" stroke-width="1.4"/><path d="M12.7 12.6 L12.70 16.90" stroke="#3d4245" stroke-width="1.4"/><path d="M12.7 12.6 L9.66 15.64" stroke="#3d4245" stroke-width="1.4"/><path d="M12.7 12.6 L8.40 12.60" stroke="#3d4245" stroke-width="1.4"/><path d="M12.7 12.6 L9.66 9.56" stroke="#3d4245" stroke-width="1.4"/><path d="M12.7 12.6 L12.70 8.30" stroke="#3d4245" stroke-width="1.4"/><path d="M12.7 12.6 L15.74 9.56" stroke="#3d4245" stroke-width="1.4"/></g></svg>
<div class="t" style="left:104.5px;top:628.93px;font-size:14px;line-height:16.8px;color:#1a1a1a;font-weight:normal;letter-spacing:-0.415px;">PC_BakingPans</div>
<svg class="b" style="left:69px;top:656px;overflow:visible" width="8" height="11"><g transform="translate(0.600 0.100)"><path d="M0 0 L5.9 5 L0 10 Z" fill="#000"/></g></svg>
<svg class="b" style="left:85px;top:653px;overflow:visible" width="18" height="18"><g transform="translate(0.200 0.300)"><rect x="0.2" y="2.4" width="15.7" height="2" fill="#3d4245"/><rect x="0.2" y="7.2" width="9" height="2" fill="#3d4245"/><rect x="9" y="7.6" width="6.9" height="1" fill="#3d4245"/><rect x="0.2" y="11.4" width="7.8" height="2" fill="#3d4245"/><circle cx="12.7" cy="12.6" r="1.9" fill="#3d4245"/><path d="M12.7 12.6 L17.00 12.60" stroke="#3d4245" stroke-width="1.4"/><path d="M12.7 12.6 L15.74 15.64" stroke="#3d4245" stroke-width="1.4"/><path d="M12.7 12.6 L12.70 16.90" stroke="#3d4245" stroke-width="1.4"/><path d="M12.7 12.6 L9.66 15.64" stroke="#3d4245" stroke-width="1.4"/><path d="M12.7 12.6 L8.40 12.60" stroke="#3d4245" stroke-width="1.4"/><path d="M12.7 12.6 L9.66 9.56" stroke="#3d4245" stroke-width="1.4"/><path d="M12.7 12.6 L12.70 8.30" stroke="#3d4245" stroke-width="1.4"/><path d="M12.7 12.6 L15.74 9.56" stroke="#3d4245" stroke-width="1.4"/></g></svg>
<div class="t" style="left:104.5px;top:653.15px;font-size:14px;line-height:16.8px;color:#1a1a1a;font-weight:normal;letter-spacing:-0.513px;">PC_Knives</div>
<svg class="b" style="left:69px;top:680px;overflow:visible" width="8" height="11"><g transform="translate(0.600 0.320)"><path d="M0 0 L5.9 5 L0 10 Z" fill="#000"/></g></svg>
<svg class="b" style="left:85px;top:677px;overflow:visible" width="18" height="18"><g transform="translate(0.200 0.520)"><rect x="0.2" y="2.4" width="15.7" height="2" fill="#3d4245"/><rect x="0.2" y="7.2" width="9" height="2" fill="#3d4245"/><rect x="9" y="7.6" width="6.9" height="1" fill="#3d4245"/><rect x="0.2" y="11.4" width="7.8" height="2" fill="#3d4245"/><circle cx="12.7" cy="12.6" r="1.9" fill="#3d4245"/><path d="M12.7 12.6 L17.00 12.60" stroke="#3d4245" stroke-width="1.4"/><path d="M12.7 12.6 L15.74 15.64" stroke="#3d4245" stroke-width="1.4"/><path d="M12.7 12.6 L12.70 16.90" stroke="#3d4245" stroke-width="1.4"/><path d="M12.7 12.6 L9.66 15.64" stroke="#3d4245" stroke-width="1.4"/><path d="M12.7 12.6 L8.40 12.60" stroke="#3d4245" stroke-width="1.4"/><path d="M12.7 12.6 L9.66 9.56" stroke="#3d4245" stroke-width="1.4"/><path d="M12.7 12.6 L12.70 8.30" stroke="#3d4245" stroke-width="1.4"/><path d="M12.7 12.6 L15.74 9.56" stroke="#3d4245" stroke-width="1.4"/></g></svg>
<div class="t" style="left:104.5px;top:677.37px;font-size:14px;line-height:16.8px;color:#1a1a1a;font-weight:normal;letter-spacing:-0.597px;">PC_Pans</div>
<svg class="b" style="left:69px;top:704px;overflow:visible" width="8" height="11"><g transform="translate(0.600 0.540)"><path d="M0 0 L5.9 5 L0 10 Z" fill="#000"/></g></svg>
<svg class="b" style="left:85px;top:701px;overflow:visible" width="18" height="18"><g transform="translate(0.200 0.740)"><rect x="0.2" y="2.4" width="15.7" height="2" fill="#3d4245"/><rect x="0.2" y="7.2" width="9" height="2" fill="#3d4245"/><rect x="9" y="7.6" width="6.9" height="1" fill="#3d4245"/><rect x="0.2" y="11.4" width="7.8" height="2" fill="#3d4245"/><circle cx="12.7" cy="12.6" r="1.9" fill="#3d4245"/><path d="M12.7 12.6 L17.00 12.60" stroke="#3d4245" stroke-width="1.4"/><path d="M12.7 12.6 L15.74 15.64" stroke="#3d4245" stroke-width="1.4"/><path d="M12.7 12.6 L12.70 16.90" stroke="#3d4245" stroke-width="1.4"/><path d="M12.7 12.6 L9.66 15.64" stroke="#3d4245" stroke-width="1.4"/><path d="M12.7 12.6 L8.40 12.60" stroke="#3d4245" stroke-width="1.4"/><path d="M12.7 12.6 L9.66 9.56" stroke="#3d4245" stroke-width="1.4"/><path d="M12.7 12.6 L12.70 8.30" stroke="#3d4245" stroke-width="1.4"/><path d="M12.7 12.6 L15.74 9.56" stroke="#3d4245" stroke-width="1.4"/></g></svg>
<div class="t" style="left:104.5px;top:701.59px;font-size:14px;line-height:16.8px;color:#1a1a1a;font-weight:normal;letter-spacing:-0.428px;">PC_Pots</div>
<svg class="b" style="left:50px;top:728px;overflow:visible" width="8" height="11"><g transform="translate(0.600 0.760)"><path d="M0 0 L5.9 5 L0 10 Z" fill="#000"/></g></svg>
<svg class="b" style="left:66px;top:725px;overflow:visible" width="18" height="18"><g transform="translate(0.200 0.960)"><rect x="0.2" y="2.4" width="15.7" height="2" fill="#3d4245"/><rect x="0.2" y="7.2" width="9" height="2" fill="#3d4245"/><rect x="9" y="7.6" width="6.9" height="1" fill="#3d4245"/><rect x="0.2" y="11.4" width="7.8" height="2" fill="#3d4245"/><circle cx="12.7" cy="12.6" r="1.9" fill="#3d4245"/><path d="M12.7 12.6 L17.00 12.60" stroke="#3d4245" stroke-width="1.4"/><path d="M12.7 12.6 L15.74 15.64" stroke="#3d4245" stroke-width="1.4"/><path d="M12.7 12.6 L12.70 16.90" stroke="#3d4245" stroke-width="1.4"/><path d="M12.7 12.6 L9.66 15.64" stroke="#3d4245" stroke-width="1.4"/><path d="M12.7 12.6 L8.40 12.60" stroke="#3d4245" stroke-width="1.4"/><path d="M12.7 12.6 L9.66 9.56" stroke="#3d4245" stroke-width="1.4"/><path d="M12.7 12.6 L12.70 8.30" stroke="#3d4245" stroke-width="1.4"/><path d="M12.7 12.6 L15.74 9.56" stroke="#3d4245" stroke-width="1.4"/></g></svg>
<div class="t" style="left:85.5px;top:725.81px;font-size:14px;line-height:16.8px;color:#1a1a1a;font-weight:normal;letter-spacing:-0.380px;">PC_OnTheTable</div>
<div class="b" style="left:375px;top:138px;width:584px;height:26px;background:#dadada;"></div>
<div class="b" style="left:375px;top:164px;width:583px;height:595px;background:#ffffff;"></div>
<div class="b" style="left:958px;top:138px;width:1px;height:622px;background:#a9a9a9;"></div>
<div class="b" style="left:375px;top:759px;width:584px;height:1px;background:#a9a9a9;"></div>
<div class="b" style="left:505px;top:138px;width:1px;height:26px;background:#bdbdbd;"></div>
<div class="b" style="left:637px;top:138px;width:1px;height:26px;background:#bdbdbd;"></div>
<div class="b" style="left:847px;top:138px;width:1px;height:26px;background:#bdbdbd;"></div>
<div class="t" style="left:380px;top:144.25px;font-size:14px;line-height:16.8px;color:#111;font-weight:normal;letter-spacing:-0.140px;">Type</div>
<div class="t" style="left:511.8px;top:144.25px;font-size:14px;line-height:16.8px;color:#111;font-weight:normal;letter-spacing:-0.506px;">ID</div>
<div class="t" style="left:643.4px;top:144.25px;font-size:14px;line-height:16.8px;color:#111;font-weight:normal;letter-spacing:-0.185px;">Name</div>
<div class="t" style="left:854.2px;top:144.25px;font-size:14px;line-height:16.8px;color:#111;font-weight:normal;letter-spacing:-0.063px;">Description</div>
<div class="b" style="left:375px;top:164px;width:583px;height:25.5px;background:#4189db;"></div>
<div class="b" style="left:375px;top:188.5px;width:583px;height:1px;background:#3a7fd5;"></div>
<div class="b" style="left:375px;top:189.5px;width:583px;height:1px;background:#f4f4f4;"></div>
<svg class="b" style="left:387px;top:168px;overflow:visible" width="11" height="17"><g transform="translate(0.500 0.500)"><rect x="0.5" y="0.5" width="9" height="1.8" fill="#ffffff"/><rect x="0.5" y="3.7" width="9" height="11.7" fill="#ffffff"/><path d="M2.5 4.1 V6.2 Q2.5 8.9 5 8.9 Q7.5 8.9 7.5 6.2 V4.1" fill="none" stroke="#4189db" stroke-width="1.3"/></g></svg>
<div class="t" style="left:407.3px;top:169.45px;font-size:14px;line-height:16.8px;color:#ffffff;font-weight:normal;letter-spacing:-0.021px;">Product</div>
<div class="t" style="left:511.8px;top:169.45px;font-size:14px;line-height:16.8px;color:#ffffff;font-weight:normal;letter-spacing:-0.438px;">PC_MAJESTIK_M...</div>
<div class="t" style="left:643.4px;top:169.45px;font-size:14px;line-height:16.8px;color:#ffffff;font-weight:normal;letter-spacing:-0.013px;">Majestik M1100 Blender</div>
<div class="t" style="left:854.2px;top:169.45px;font-size:14px;line-height:16.8px;color:#ffffff;font-weight:normal;letter-spacing:-0.281px;">Strong, 700W e...</div>
<div class="b" style="left:375px;top:190.5px;width:583px;height:24.24000000000001px;background:#f5f5f5;"></div>
<div class="b" style="left:375px;top:214.74px;width:583px;height:1px;background:#e4e4e4;"></div>
<svg class="b" style="left:387px;top:193px;overflow:visible" width="11" height="17"><g transform="translate(0.500 0.740)"><rect x="0.5" y="0.5" width="9" height="1.8" fill="#3d4245"/><rect x="0.5" y="3.7" width="9" height="11.7" fill="#3d4245"/><path d="M2.5 4.1 V6.2 Q2.5 8.9 5 8.9 Q7.5 8.9 7.5 6.2 V4.1" fill="none" stroke="#f5f5f5" stroke-width="1.3"/></g></svg>
<div class="t" style="left:407.3px;top:194.59px;font-size:14px;line-height:16.8px;color:#1a1a1a;font-weight:normal;letter-spacing:-0.021px;">Product</div>
<div class="t" style="left:511.8px;top:194.59px;font-size:14px;line-height:16.8px;color:#1a1a1a;font-weight:normal;letter-spacing:-0.438px;">PC_MAJESTIK_M...</div>
<div class="t" style="left:643.4px;top:194.59px;font-size:14px;line-height:16.8px;color:#1a1a1a;font-weight:normal;letter-spacing:-0.066px;">Majestik M850 Blender</div>
<div class="t" style="left:854.2px;top:194.59px;font-size:14px;line-height:16.8px;color:#1a1a1a;font-weight:normal;letter-spacing:-0.281px;">Strong, 600W e...</div>
<div class="b" style="left:375px;top:215.74px;width:583px;height:24.23999999999998px;background:#ffffff;"></div>
<div class="b" style="left:375px;top:239.98px;width:583px;height:1px;background:#e4e4e4;"></div>
<svg class="b" style="left:387px;top:218px;overflow:visible" width="11" height="17"><g transform="translate(0.500 0.980)"><rect x="0.5" y="0.5" width="9" height="1.8" fill="#3d4245"/><rect x="0.5" y="3.7" width="9" height="11.7" fill="#3d4245"/><path d="M2.5 4.1 V6.2 Q2.5 8.9 5 8.9 Q7.5 8.9 7.5 6.2 V4.1" fill="none" stroke="#ffffff" stroke-width="1.3"/></g></svg>
<div class="t" style="left:407.3px;top:219.73px;font-size:14px;line-height:16.8px;color:#1a1a1a;font-weight:normal;letter-spacing:-0.021px;">Product</div>
<div class="t" style="left:511.8px;top:219.73px;font-size:14px;line-height:16.8px;color:#1a1a1a;font-weight:normal;letter-spacing:-0.778px;">PC_CROWNE_BL1...</div>
<div class="t" style="left:643.4px;top:219.73px;font-size:14px;line-height:16.8px;color:#1a1a1a;font-weight:normal;letter-spacing:-0.236px;">Crowne BL1300 Blender</div>
<div class="t" style="left:854.2px;top:219.73px;font-size:14px;line-height:16.8px;color:#1a1a1a;font-weight:normal;letter-spacing:-0.281px;">Strong, 800W e...</div>
<div class="b" style="left:375px;top:240.98px;width:583px;height:24.240000000000038px;background:#f5f5f5;"></div>
<div class="b" style="left:375px;top:265.22px;width:583px;height:1px;background:#e4e4e4;"></div>
<svg class="b" style="left:387px;top:244px;overflow:visible" width="11" height="17"><g transform="translate(0.500 0.220)"><rect x="0.5" y="0.5" width="9" height="1.8" fill="#3d4245"/><rect x="0.5" y="3.7" width="9" height="11.7" fill="#3d4245"/><path d="M2.5 4.1 V6.2 Q2.5 8.9 5 8.9 Q7.5 8.9 7.5 6.2 V4.1" fill="none" stroke="#f5f5f5" stroke-width="1.3"/></g></svg>
<div class="t" style="left:407.3px;top:244.87px;font-size:14px;line-height:16.8px;color:#1a1a1a;font-weight:normal;letter-spacing:-0.021px;">Product</div>
<div class="t" style="left:511.8px;top:244.87px;font-size:14px;line-height:16.8px;color:#1a1a1a;font-weight:normal;letter-spacing:-0.778px;">PC_CROWNE_BL7...</div>
<div class="t" style="left:643.4px;top:244.87px;font-size:14px;line-height:16.8px;color:#1a1a1a;font-weight:normal;letter-spacing:-0.252px;">Crowne BL700 Blender</div>
<div class="t" style="left:854.2px;top:244.87px;font-size:14px;line-height:16.8px;color:#1a1a1a;font-weight:normal;letter-spacing:-0.281px;">Strong, 600W e...</div>
<div class="b" style="left:375px;top:266.22px;width:583px;height:24.239999999999952px;background:#ffffff;"></div>
<div class="b" style="left:375px;top:290.46px;width:583px;height:1px;background:#e4e4e4;"></div>
<svg class="b" style="left:387px;top:269px;overflow:visible" width="11" height="17"><g transform="translate(0.500 0.460)"><rect x="0.5" y="0.5" width="9" height="1.8" fill="#3d4245"/><rect x="0.5" y="3.7" width="9" height="11.7" fill="#3d4245"/><path d="M2.5 4.1 V6.2 Q2.5 8.9 5 8.9 Q7.5 8.9 7.5 6.2 V4.1" fill="none" stroke="#ffffff" stroke-width="1.3"/></g></svg>
<div class="t" style="left:407.3px;top:270.01px;font-size:14px;line-height:16.8px;color:#1a1a1a;font-weight:normal;letter-spacing:-0.021px;">Product</div>
<div class="t" style="left:511.8px;top:270.01px;font-size:14px;line-height:16.8px;color:#1a1a1a;font-weight:normal;letter-spacing:-0.778px;">PC_CROWNE_BL3...</div>
<div class="t" style="left:643.4px;top:270.01px;font-size:14px;line-height:16.8px;color:#1a1a1a;font-weight:normal;letter-spacing:-0.252px;">Crowne BL300 Blender</div>
<div class="t" style="left:854.2px;top:270.01px;font-size:14px;line-height:16.8px;color:#1a1a1a;font-weight:normal;letter-spacing:-0.126px;">350W electric ...</div>
<div class="b" style="left:375px;top:291.46px;width:583px;height:24.24000000000001px;background:#f5f5f5;"></div>
<div class="b" style="left:375px;top:315.7px;width:583px;height:1px;background:#e4e4e4;"></div>
<svg class="b" style="left:387px;top:294px;overflow:visible" width="11" height="17"><g transform="translate(0.500 0.700)"><rect x="0.5" y="0.5" width="9" height="1.8" fill="#3d4245"/><rect x="0.5" y="3.7" width="9" height="11.7" fill="#3d4245"/><path d="M2.5 4.1 V6.2 Q2.5 8.9 5 8.9 Q7.5 8.9 7.5 6.2 V4.1" fill="none" stroke="#f5f5f5" stroke-width="1.3"/></g></svg>
<div class="t" style="left:407.3px;top:295.15px;font-size:14px;line-height:16.8px;color:#1a1a1a;font-weight:normal;letter-spacing:-0.021px;">Product</div>
<div class="t" style="left:511.8px;top:295.15px;font-size:14px;line-height:16.8px;color:#1a1a1a;font-weight:normal;letter-spacing:-0.478px;">PC_LIFEMIX_MX4...</div>
<div class="t" style="left:643.4px;top:295.15px;font-size:14px;line-height:16.8px;color:#1a1a1a;font-weight:normal;letter-spacing:-0.074px;">LifeMix MX4000 Blender</div>
<div class="t" style="left:854.2px;top:295.15px;font-size:14px;line-height:16.8px;color:#1a1a1a;font-weight:normal;letter-spacing:-0.080px;">Professional-gr...</div>
<div class="b" style="left:375px;top:316.7px;width:583px;height:24.24000000000001px;background:#ffffff;"></div>
<div class="b" style="left:375px;top:340.94px;width:583px;height:1px;background:#e4e4e4;"></div>
<svg class="b" style="left:387px;top:319px;overflow:visible" width="11" height="17"><g transform="translate(0.500 0.940)"><rect x="0.5" y="0.5" width="9" height="1.8" fill="#3d4245"/><rect x="0.5" y="3.7" width="9" height="11.7" fill="#3d4245"/><path d="M2.5 4.1 V6.2 Q2.5 8.9 5 8.9 Q7.5 8.9 7.5 6.2 V4.1" fill="none" stroke="#ffffff" stroke-width="1.3"/></g></svg>
<div class="t" style="left:407.3px;top:320.29px;font-size:14px;line-height:16.8px;color:#1a1a1a;font-weight:normal;letter-spacing:-0.021px;">Product</div>
<div class="t" style="left:511.8px;top:320.29px;font-size:14px;line-height:16.8px;color:#1a1a1a;font-weight:normal;letter-spacing:-0.478px;">PC_LIFEMIX_MX3...</div>
<div class="t" style="left:643.4px;top:320.29px;font-size:14px;line-height:16.8px;color:#1a1a1a;font-weight:normal;letter-spacing:-0.074px;">LifeMix MX3000 Blender</div>
<div class="t" style="left:854.2px;top:320.29px;font-size:14px;line-height:16.8px;color:#1a1a1a;font-weight:normal;letter-spacing:-0.080px;">Professional-gr...</div>
<div class="b" style="left:488.3px;top:178.3px;width:179.8px;height:137.6px;background:#ffffff;border-radius:3px;box-shadow:-1px 1px 4px rgba(0,0,0,0.35);"></div>
<div class="b" style="left:491.3px;top:181px;width:175.5px;height:23px;background:#dae6f6;border-radius:3px;"></div>
<div class="b" style="left:491.7px;top:207px;width:174px;height:1.2px;background:#d0d0d0;"></div>
<div class="b" style="left:491.7px;top:236.3px;width:174px;height:1.2px;background:#d0d0d0;"></div>
<div class="b" style="left:491.7px;top:289px;width:174px;height:1.2px;background:#d0d0d0;"></div>
<div class="t" style="left:495.5px;top:184.75px;font-size:14px;line-height:16.8px;color:#111;font-weight:normal;letter-spacing:-0.169px;">Open in Tab</div>
<div class="t" style="left:495.5px;top:215.25px;font-size:14px;line-height:16.8px;color:#111;font-weight:normal;letter-spacing:-0.5px;">Open in WCS Management Center</div>
<div class="t" style="left:495.5px;top:243.65px;font-size:14px;line-height:16.8px;color:#111;font-weight:normal;letter-spacing:-0.108px;">Search Product Variants</div>
<div class="t" style="left:495.5px;top:268.25px;font-size:14px;line-height:16.8px;color:#111;font-weight:normal;letter-spacing:-0.145px;">Search Product Pictures</div>
<div class="t" style="left:495.5px;top:297.25px;font-size:14px;line-height:16.8px;color:#111;font-weight:normal;letter-spacing:-0.126px;">Create Product Teaser</div>
<div class="b" style="left:616px;top:211px;width:85px;height:24px;background:#3f87db;border:1px solid #ffffff;border-radius:4px;box-sizing:border-box;box-shadow:0 0 1px rgba(0,0,0,0.3);"></div>
<div class="t" style="left:623.4px;top:215.85px;font-size:14px;line-height:16.8px;color:#ffffff;font-weight:normal;letter-spacing:-0.35px;">Open in Tab</div>
<svg class="b" style="left:596px;top:184px;overflow:visible" width="31" height="39"><g transform="translate(0.000 0.000)"><defs><linearGradient id="hg" x1="0" y1="0" x2="1" y2="1"><stop offset="0.45" stop-color="#ffffff"/><stop offset="1" stop-color="#d0d0d0"/></linearGradient></defs><path d="M10.2 21.4 V6.6 Q12.5 2.6 14.75 6.6 V11.8 Q16.6 10.4 18.3 12.2 Q20.4 11.7 22.4 13.6 Q25.2 13.1 26.7 16 V26.5 L22.9 35.6 H11.7 L4.6 22.4 Q3.4 19.6 6.1 18.8 Q8.4 18.4 10.2 21.4 Z" fill="url(#hg)" stroke="#000" stroke-width="1.15" stroke-linejoin="round"/><path d="M14.75 11.8 V17.8 M18.3 12.2 V17.8 M22.4 13.6 V18.8" stroke="#000" stroke-width="1.1"/></g></svg>
</body></html>
